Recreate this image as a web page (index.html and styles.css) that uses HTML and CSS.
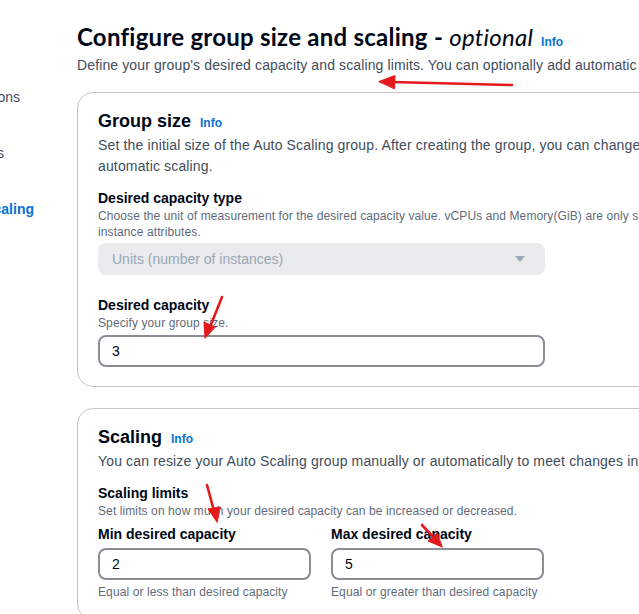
FILE: index.html
```html
<!DOCTYPE html>
<html lang="en">
<head>
<meta charset="utf-8">
<title>Configure group size and scaling</title>
<link rel="stylesheet" href="styles.css">
</head>
<body>
<div class="page">
  <nav class="steps">
    <div class="step step-launch"><span class="step-title">Choose instance launch options</span></div>
    <div class="step step-advanced"><span class="step-title">Configure advanced options</span></div>
    <div class="step step-current"><span class="step-title">Configure group size and scaling</span></div>
  </nav>
  <main class="content">
    <header class="page-header">
      <h1 class="page-title">Configure group size and scaling - <em>optional</em><a class="info" href="#">Info</a></h1>
      <p class="page-desc">Define your group's desired capacity and scaling limits. You can optionally add automatic scaling policies to your group.</p>
    </header>

    <section class="card">
      <h2 class="card-title">Group size<a class="info" href="#">Info</a></h2>
      <p class="card-desc">Set the initial size of the Auto Scaling group. After creating the group, you can change its size to meet demand, either manually or by using<br>automatic scaling.</p>

      <div class="field">
        <div class="label">Desired capacity type</div>
        <div class="hint">Choose the unit of measurement for the desired capacity value. vCPUs and Memory(GiB) are only supported for mixed instances groups configured with a set of<br>instance attributes.</div>
        <div class="select disabled">
          <span>Units (number of instances)</span>
          <svg class="caret" width="12" height="8" viewBox="0 0 12 8"><path d="M1 1h10L6 7z" fill="currentColor"/></svg>
        </div>
      </div>

      <div class="field spaced">
        <div class="label">Desired capacity</div>
        <div class="hint">Specify your group size.</div>
        <div class="input wide">3</div>
      </div>
    </section>

    <section class="card">
      <h2 class="card-title">Scaling<a class="info" href="#">Info</a></h2>
      <p class="card-desc">You can resize your Auto Scaling group manually or automatically to meet changes in demand.</p>

      <div class="field">
        <div class="label">Scaling limits</div>
        <div class="hint">Set limits on how much your desired capacity can be increased or decreased.</div>
        <div class="limits">
          <div class="limit">
            <div class="label">Min desired capacity</div>
            <div class="input">2</div>
            <div class="hint under">Equal or less than desired capacity</div>
          </div>
          <div class="limit">
            <div class="label">Max desired capacity</div>
            <div class="input">5</div>
            <div class="hint under">Equal or greater than desired capacity</div>
          </div>
        </div>
      </div>
    </section>
  </main>

  <svg class="annotations" width="639" height="614" viewBox="0 0 639 614">
    <g stroke="#e3191b" stroke-width="2.6" stroke-linecap="round" fill="#e3191b">
      <line x1="512" y1="85" x2="392" y2="82"/>
      <polygon points="379,81.5 395,75.5 394.5,88.5" stroke-width="1"/>
      <line x1="222" y1="297" x2="210" y2="327"/>
      <polygon points="205,338 204,322 215,327" stroke-width="1"/>
      <line x1="207" y1="485" x2="214" y2="511"/>
      <polygon points="217,522 208,509 220,507" stroke-width="1"/>
      <line x1="422" y1="525" x2="435" y2="539"/>
      <polygon points="442,547 428,541 437,533" stroke-width="1"/>
    </g>
  </svg>
</div>
</body>
</html>
```

FILE: styles.css
```css
* { box-sizing: border-box; }

html, body {
  margin: 0;
  padding: 0;
  background: #ffffff;
}

body {
  font-family: "Liberation Sans", Arial, sans-serif;
  color: #000716;
  font-size: 14px;
  line-height: 20px;
}

.page {
  position: relative;
  display: flex;
  width: 639px;
  height: 614px;
  overflow: hidden;
}

/* ---- side navigation (clipped by viewport) ---- */
.steps {
  flex: 0 0 77px;
  width: 77px;
  overflow: hidden;
  padding-top: 87px;
  display: flex;
  flex-direction: column;
  gap: 36px;
}

.step {
  display: flex;
  justify-content: flex-end;
  white-space: nowrap;
  height: 20px;
  color: #414d5c;
}

.step-launch { padding-right: 57px; }
.step-advanced { padding-right: 73px; }
.step-current { padding-right: 43px; color: #0972d3; font-weight: 700; }

.step-title { flex: 0 0 auto; }

/* ---- main content ---- */
.content {
  flex: 0 0 960px;
  width: 960px;
  padding-top: 22px;
}

.page-header { margin-bottom: 17px; }

.page-title {
  margin: 0;
  font-family: Lato, "Liberation Sans", sans-serif;
  font-size: 24px;
  line-height: 30px;
  font-weight: 700;
  letter-spacing: 0.25px;
  white-space: nowrap;
}

.page-title em { font-weight: 400; font-style: italic; }

.info {
  font-family: "Liberation Sans", Arial, sans-serif;
  color: #0972d3;
  font-size: 12px;
  line-height: 12px;
  font-weight: 700;
  letter-spacing: 0;
  text-decoration: none;
  margin-left: 8px;
}

.card-title .info { margin-left: 9px; }

.page-desc {
  margin: 3px 0 0;
  color: #414d5c;
  white-space: nowrap;
  letter-spacing: 0.12px;
}

.card {
  border: 1px solid #c6c6cd;
  border-radius: 16px;
  padding: 17px 20px 19px;
  margin-bottom: 21px;
  width: 960px;
}

.card-title {
  margin: 0;
  font-size: 18px;
  line-height: 22px;
  font-weight: 700;
}

.card-desc {
  margin: 3px 0 0;
  color: #414d5c;
  line-height: 21px;
  white-space: nowrap;
  letter-spacing: 0.15px;
}

.field { margin-top: 11px; }
.field.spaced { margin-top: 20px; }

.label {
  font-weight: 700;
  font-size: 14px;
  line-height: 20px;
}

.hint {
  color: #5f6b7a;
  font-size: 12px;
  line-height: 16px;
  white-space: nowrap;
  letter-spacing: 0.1px;
}

.select {
  margin-top: 3px;
  width: 447px;
  height: 32px;
  border-radius: 8px;
  display: flex;
  align-items: center;
  justify-content: space-between;
  padding: 0 19px 0 14px;
}

.select.disabled {
  background: #e9ebed;
  color: #9ba7b6;
}

.caret { color: #9ba7b6; }

.input {
  margin-top: 4px;
  height: 32px;
  border: 2px solid #8c8c94;
  border-radius: 8px;
  display: flex;
  align-items: center;
  padding: 0 12px;
  width: 212px;
}

.input.wide { width: 447px; }

.limits {
  display: flex;
  gap: 20px;
  margin-top: 5px;
}

.limit .input { width: 213px; }

.hint.under { margin-top: 4px; }

.annotations {
  position: absolute;
  left: 0;
  top: 0;
  pointer-events: none;
}
```
